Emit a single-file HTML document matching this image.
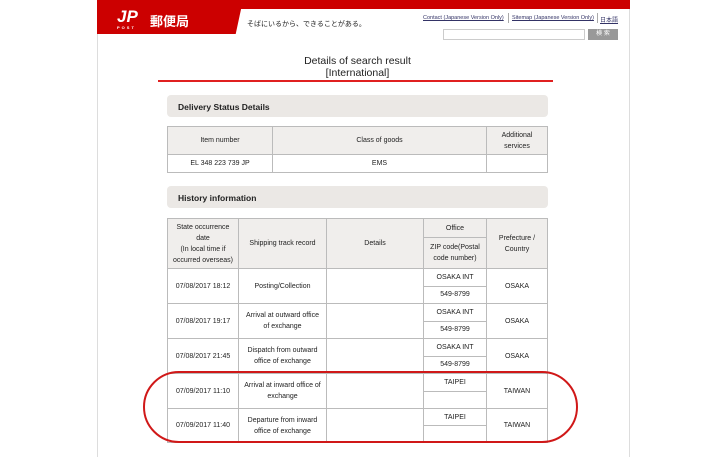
<!DOCTYPE html>
<html><head><meta charset="utf-8"><style>
*{margin:0;padding:0;box-sizing:border-box}
body{width:728px;height:457px;background:#fff;position:relative;overflow:hidden;font-family:"Liberation Sans","Noto Sans CJK JP",sans-serif;color:#222}
.pg{position:absolute;left:97px;top:0;width:533px;height:457px;border-left:1px solid #ddd;border-right:1px solid #ddd;background:#fff}
.topred{position:absolute;left:97px;top:0;width:533px;height:9px;background:#cc0000}
.logo{position:absolute;left:97px;top:0;width:146px;height:34px;background:#cc0000;clip-path:polygon(0 0,100% 0,95% 100%,0 100%)}
.abs{position:absolute}
.gbox{position:absolute;left:167px;width:381px;height:22px;background:#ebe8e5;border-radius:4px;font-size:8.5px;font-weight:bold;padding:7px 0 0 11px}
table{position:absolute;border-collapse:collapse;font-size:7px;text-align:center}
td{border:1px solid #bbb;padding:0;line-height:11px}
th{border:1px solid #bbb;background:#f0eeec;font-weight:normal;line-height:11px}
</style></head><body>
<div class="pg"></div>
<div class="topred"></div>
<div class="logo"></div>
<div class="abs" style="left:117px;top:8px;color:#fff;font-weight:bold;font-style:italic;font-size:17px;line-height:17px">JP</div>
<div class="abs" style="left:117px;top:25px;color:#fff;font-size:4px;letter-spacing:2px;font-weight:bold">POST</div>
<div class="abs" style="left:150px;top:11px;color:#fff;font-size:13px;font-weight:bold">郵便局</div>
<div class="abs" style="left:247px;top:19px;font-size:7px">そばにいるから、できることがある。</div>
<div class="abs" style="left:423px;top:15px;font-size:5.5px;color:#336;text-decoration:underline">Contact (Japanese Version Only)</div>
<div class="abs" style="left:508px;top:13px;width:1px;height:10px;background:#aaa"></div>
<div class="abs" style="left:512px;top:15px;font-size:5.5px;color:#336;text-decoration:underline">Sitemap (Japanese Version Only)</div>
<div class="abs" style="left:597px;top:13px;width:1px;height:10px;background:#aaa"></div>
<div class="abs" style="left:600px;top:15px;font-size:6px;color:#336;text-decoration:underline">日本語</div>
<div class="abs" style="left:443px;top:29px;width:142px;height:11px;border:1px solid #ccc"></div>
<div class="abs" style="left:588px;top:29px;width:30px;height:11px;background:#999;color:#fff;font-size:6px;text-align:center;line-height:11px">検 索</div>
<div class="abs" style="left:160px;top:55px;width:395px;text-align:center;font-size:10.5px;line-height:12px">Details of search result<br>[International]</div>
<div class="abs" style="left:158px;top:80px;width:395px;height:2px;background:#e02020"></div>
<div class="gbox" style="top:95px">Delivery Status Details</div>
<table style="left:167px;top:126px;width:381px">
<tr style="height:28px"><th style="width:105px">Item number</th><th style="width:214px">Class of goods</th><th>Additional<br>services</th></tr>
<tr style="height:18px"><td>EL 348 223 739 JP</td><td>EMS</td><td></td></tr>
</table>
<div class="gbox" style="top:186px">History information</div>
<table style="left:167px;top:218px;width:381px">
<tr style="height:19px"><th rowspan="2" style="width:71px">State occurrence<br>date<br>(In local time if<br>occurred overseas)</th><th rowspan="2" style="width:88px">Shipping track record</th><th rowspan="2" style="width:97px">Details</th><th style="width:63px">Office</th><th rowspan="2">Prefecture /<br>Country</th></tr>
<tr style="height:31px"><th>ZIP code(Postal<br>code number)</th></tr>
<tr style="height:17.5px"><td rowspan="2">07/08/2017 18:12</td><td rowspan="2">Posting/Collection</td><td rowspan="2"></td><td>OSAKA INT</td><td rowspan="2">OSAKA</td></tr>
<tr style="height:17.5px"><td>549-8799</td></tr>
<tr style="height:17.5px"><td rowspan="2">07/08/2017 19:17</td><td rowspan="2">Arrival at outward office<br>of exchange</td><td rowspan="2"></td><td>OSAKA INT</td><td rowspan="2">OSAKA</td></tr>
<tr style="height:17.5px"><td>549-8799</td></tr>
<tr style="height:17.5px"><td rowspan="2">07/08/2017 21:45</td><td rowspan="2">Dispatch from outward<br>office of exchange</td><td rowspan="2"></td><td>OSAKA INT</td><td rowspan="2">OSAKA</td></tr>
<tr style="height:17.5px"><td>549-8799</td></tr>
<tr style="height:17.5px"><td rowspan="2">07/09/2017 11:10</td><td rowspan="2">Arrival at inward office of<br>exchange</td><td rowspan="2"></td><td>TAIPEI</td><td rowspan="2">TAIWAN</td></tr>
<tr style="height:17.5px"><td></td></tr>
<tr style="height:17px"><td rowspan="2">07/09/2017 11:40</td><td rowspan="2">Departure from inward<br>office of exchange</td><td rowspan="2"></td><td>TAIPEI</td><td rowspan="2">TAIWAN</td></tr>
<tr style="height:17px"><td></td></tr>
</table>
<div class="abs" style="left:143px;top:371px;width:435px;height:72px;border:2px solid #d01818;border-radius:36px/36px"></div>
</body></html>
